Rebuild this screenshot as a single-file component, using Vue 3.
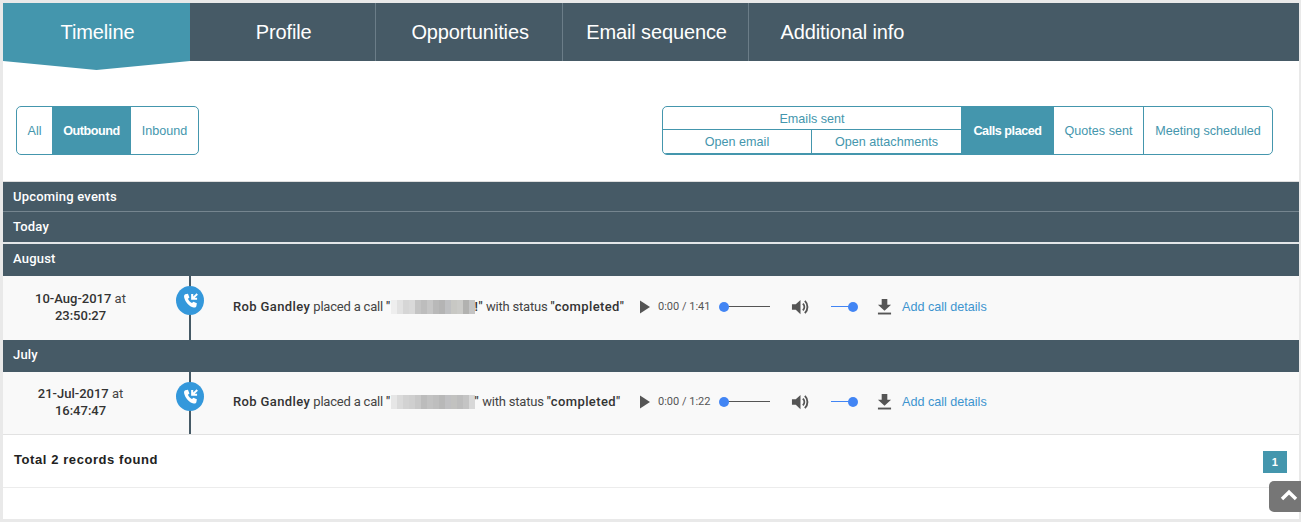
<script setup>
const tabs = ['Timeline', 'Profile', 'Opportunities', 'Email sequence', 'Additional info']
const blurA = ['#eeeeee','#e2e2e2','#d6d6d6','#d9d9d9','#c4c4c4','#bdbdbd','#c6c6c6','#b9b9b9','#b4b4b4','#bfc0c2','#c8c8c4','#cbcbc8','#b2b2b0','#c4c4c4']
const blurB = ['#e6e6e6','#dadada','#d2d2d2','#cfcfcf','#c8c8c8','#bcbcbc','#c2c2c2','#bebebe','#b8b8b8','#c0c0c2','#c2c2c0','#bdbdbd','#c4c4c4','#d8d8d8']
const records = [
  { month: 'August', date: '10-Aug-2017', time: '23:50:27', total: '1:41', blur: blurA, tail: '!"', last: false },
  { month: 'July', date: '21-Jul-2017', time: '16:47:47', total: '1:22', blur: blurB, tail: '"', last: true }
]
</script>

<template>
  <div class="page">
    <nav class="tabs">
      <div v-for="(t, i) in tabs" :key="t" class="tab" :class="{ active: i === 0 }">{{ t }}</div>
    </nav>

    <section class="filters">
      <div class="group">
        <span class="cell all">All</span>
        <span class="cell on outbound">Outbound</span>
        <span class="cell inbound">Inbound</span>
      </div>
      <div class="group right">
        <div class="emails">
          <div class="emails-top">Emails sent</div>
          <div class="emails-bottom">
            <span class="open-email">Open email</span>
            <span class="open-att">Open attachments</span>
          </div>
        </div>
        <span class="cell on calls">Calls placed</span>
        <span class="cell quotes">Quotes sent</span>
        <span class="cell meeting">Meeting scheduled</span>
      </div>
    </section>

    <div class="head h-up">Upcoming events</div>
    <div class="head h-today">Today</div>

    <template v-for="r in records" :key="r.month">
      <div class="head h-month">{{ r.month }}</div>
      <div class="row" :class="{ last: r.last }">
        <div class="when"><b>{{ r.date }}</b> at<br /><b>{{ r.time }}</b></div>
        <div class="rail">
          <span class="dot">
            <svg viewBox="0 0 16 16" width="17" height="17" aria-hidden="true">
              <path fill="#fff" d="M3 2.2 5.6 1.6 7 5.1 5.6 6.3C6.1 7.8 7.7 9.6 9.4 10.4L10.7 9.1 14 10.7 13.5 13.4C13.2 14.5 12.2 14.8 11 14.6 6.6 13.7 3 9.6 2 5 1.8 3.6 2.2 2.6 3 2.2Z" />
              <path fill="#fff" d="M13.7 1.2 15 2.5 12 5.4 14.2 5.4 14.2 7.4 8.6 7.4 8.6 1.8 10.6 1.8 10.6 4.2Z" />
            </svg>
          </span>
        </div>
        <div class="desc">
          <b>Rob Gandley</b> placed a call <b>"</b><span class="blur"><i v-for="(c, n) in r.blur" :key="n" :style="{ background: c }"></i></span><b>{{ r.tail }}</b> with status <b>"completed"</b>
        </div>
        <div class="player">
          <svg class="play" viewBox="0 0 12 14" width="12" height="14" aria-hidden="true"><path fill="#555" d="M1 .5 11 7 1 13.5Z" /></svg>
          <span class="clock">0:00 / {{ r.total }}</span>
          <span class="seek"><i class="knob"></i></span>
          <svg class="vol" viewBox="0 0 20 18" width="19" height="18" aria-hidden="true">
            <path fill="#555" d="M1 6h4l5-4.5v15L5 12H1Z" />
            <path fill="none" stroke="#555" stroke-width="2" d="M12.5 5.5c2 2 2 5 0 7M14.6 2.6c3.6 3.4 3.6 9.4 0 12.8" />
          </svg>
          <span class="volume"><i class="knob"></i></span>
          <svg class="dl" viewBox="0 0 16 18" width="15" height="17" aria-hidden="true">
            <path fill="#555" d="M5 1h6v6h4L8 13.5 1 7h4Z" />
            <rect x="1" y="15.5" width="14" height="2" fill="#555" />
          </svg>
          <a class="add">Add call details</a>
        </div>
      </div>
    </template>

    <footer class="foot">
      <strong>Total 2 records found</strong>
      <span class="pager">1</span>
    </footer>
    <div class="tail"></div>
    <button class="top" aria-label="Back to top">
      <svg viewBox="0 0 18 12" width="18" height="12" aria-hidden="true"><path fill="none" stroke="#fff" stroke-width="3.4" d="M2 10 9 3.2 16 10" /></svg>
    </button>
  </div>
</template>

<style>
html, body { margin: 0; background: #e9e9e9; }
</style>

<style scoped>
.page {
  position: relative;
  box-sizing: border-box;
  width: 1296px;
  height: 516px;
  margin: 3px 0 0 3px;
  background: #fff;
  font-family: "Liberation Sans", Arial, sans-serif;
  font-size: 12px;
}
.tabs { display: flex; height: 58px; background: #465a66; }
.tab {
  position: relative;
  box-sizing: border-box;
  width: 186.4px;
  padding-left: 2px;
  border-right: 1px solid #6b7d88;
  color: #fff;
  font-size: 20px;
  letter-spacing: -0.12px;
  line-height: 58px;
  text-align: center;
}
.tab:last-child { padding-left: 0; border-right: 0; }
.tab.active { width: 187px; border-right: 0; background: #4496ad; }
.tab.active::after {
  content: "";
  position: absolute;
  top: 58px;
  left: 0;
  width: 100%;
  height: 9px;
  background: #4496ad;
  clip-path: polygon(0 0, 100% 0, 50% 100%);
}
.filters {
  box-sizing: border-box;
  display: flex;
  justify-content: space-between;
  height: 121px;
  padding: 45px 26px 0 13px;
  border-bottom: 1px solid #dedede;
}
.group {
  box-sizing: border-box;
  display: flex;
  width: 183px;
  height: 49px;
  overflow: hidden;
  border: 1px solid #4496ad;
  border-radius: 5px;
  color: #4496ad;
  font-size: 12.6px;
}
.group.right { width: 611px; }
.cell { display: flex; align-items: center; justify-content: center; box-sizing: border-box; }
.cell.on { margin: -1px 0; background: #4496ad; color: #fff; font-weight: 700; letter-spacing: -0.45px; }
.all { width: 35px; }
.outbound { width: 79px; }
.inbound { width: 67px; }
.emails { width: 298px; display: flex; flex-direction: column; height: 46px; }
.emails-top { height: 23px; line-height: 24px; text-align: center; border-bottom: 1px solid #4496ad; box-sizing: border-box; }
.emails-bottom { display: flex; height: 23px; border-bottom: 1px solid #4496ad; line-height: 24px; text-align: center; box-sizing: content-box; }
.open-email { width: 148px; border-right: 1px solid #4496ad; }
.open-att { flex: 1; }
.calls { width: 93px; }
.quotes { width: 90px; border-right: 1px solid #4496ad; }
.meeting { flex: 1; }
.head {
  box-sizing: border-box;
  padding-left: 10px;
  background: #465a66;
  color: #fff;
  font-family: Roboto, "Liberation Sans", sans-serif;
  font-size: 13px;
  font-weight: 500;
  letter-spacing: 0.2px;
}
.h-up { height: 30px; line-height: 29px; border-bottom: 1px solid #75858f; }
.h-today { height: 32px; line-height: 29px; border-bottom: 2px solid #e3e6e8; }
.h-month { height: 32px; line-height: 29px; }
.row {
  box-sizing: border-box;
  display: flex;
  align-items: center;
  height: 64px;
  background: #f9f9f9;
  color: #333;
  font-family: Roboto, "Liberation Sans", sans-serif;
  font-size: 13px;
}
.row.last { height: 63px; border-bottom: 1px solid #e2e2e2; }
.when { width: 155px; margin: -3px 5px 0 0; text-align: center; line-height: 17px; color: #444; }
.when b { font-weight: 500; color: #333; }
.rail { position: relative; width: 55px; height: 100%; }
.rail::before {
  content: "";
  position: absolute;
  left: 26px;
  top: 0;
  bottom: 0;
  width: 2px;
  background: #465a66;
}
.dot {
  position: absolute;
  left: 13px;
  top: 10px;
  width: 28px;
  height: 29px;
  display: flex;
  align-items: center;
  justify-content: center;
  background: #3498db;
  border-radius: 50%;
}
.desc { display: flex; align-items: center; width: 407px; margin: -3px 0 0 15px; white-space: pre-wrap; color: #444; letter-spacing: -0.2px; }
.desc b { font-weight: 500; color: #333; letter-spacing: 0.38px; }
.blur { display: inline-flex; height: 14px; width: 84px; }
.blur i { flex: 1; }
.player { display: flex; align-items: center; height: 18px; margin-top: -3px; }
.play { margin-left: -1px; }
.clock { width: 58px; margin-left: 7px; font-size: 11px; color: #555; white-space: nowrap; }
.seek { position: relative; width: 46px; height: 1px; margin-left: 8px; background: #555; }
.seek .knob { left: -5px; }
.knob {
  position: absolute;
  top: -4.5px;
  width: 10px;
  height: 10px;
  background: #4285f4;
  border-radius: 50%;
}
.vol { margin-left: 21px; }
.volume { position: relative; width: 22px; height: 1px; margin-left: 21px; background: #4285f4; }
.volume .knob { right: -5px; }
.dl { margin-left: 24px; }
.add { margin-left: 10px; color: #3d94cf; font-family: "Liberation Sans", Arial, sans-serif; font-size: 12.6px; white-space: nowrap; }
.foot {
  box-sizing: border-box;
  display: flex;
  align-items: center;
  justify-content: space-between;
  height: 53px;
  padding: 0 12px 0 11px;
  border-bottom: 1px solid #ececec;
  color: #222;
  font-size: 13px;
  letter-spacing: 0.58px;
}
.foot strong { margin-top: -3px; }
.pager {
  width: 24px;
  height: 22px;
  margin-top: 1px;
  background: #4496ad;
  color: #fff;
  font-size: 11px;
  font-weight: 700;
  line-height: 22px;
  text-align: center;
}
.top {
  position: absolute;
  right: -3px;
  bottom: 7px;
  width: 33px;
  height: 31px;
  padding: 0 0 0 6px;
  border: 0;
  border-radius: 5px 0 0 5px;
  background: #767676;
}
.tail { height: 31px; }
</style>
